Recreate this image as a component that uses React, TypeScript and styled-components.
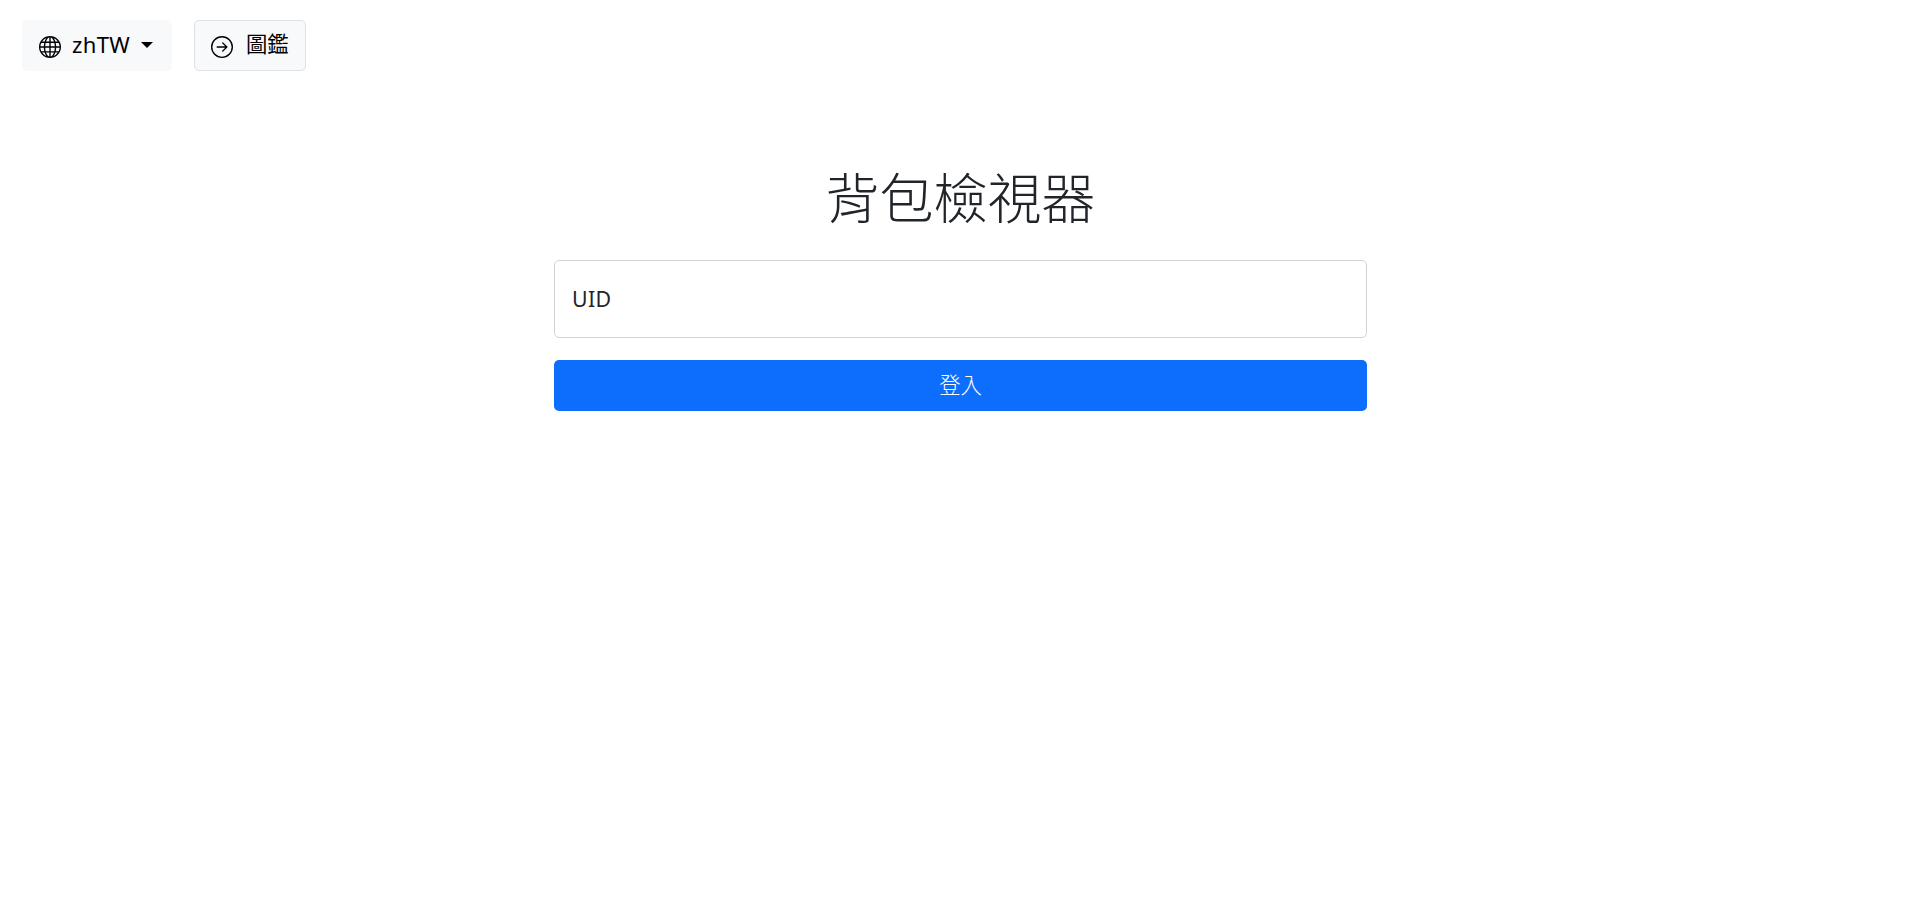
import styled, { createGlobalStyle } from "styled-components";

const GlobalStyle = createGlobalStyle`
  html,
  body {
    margin: 0;
    padding: 0;
    background: #fff;
  }

  body {
    font-family: "Noto Sans", "Noto Sans CJK TC", sans-serif;
    font-size: 21.33px;
    line-height: 1.5;
    color: #212529;
  }

  * {
    box-sizing: border-box;
  }
`;

const Page = styled.div`
  min-height: 100vh;
  padding: 20px 20px 20px 22px;
`;

const Toolbar = styled.nav`
  display: flex;
  align-items: stretch;
  gap: 22px;
  height: 51px;
`;

const ToolButton = styled.button<{ $outlined?: boolean }>`
  display: flex;
  align-items: center;
  width: ${(p) => (p.$outlined ? "112px" : "150px")};
  padding: 0 0 0 ${(p) => (p.$outlined ? "16px" : "17px")};
  gap: ${(p) => (p.$outlined ? "13px" : "11px")};
  font: inherit;
  color: #000;
  background: #f8f9fa;
  border: ${(p) => (p.$outlined ? "1px solid #dee2e6" : "0")};
  border-radius: 5px;

  & svg {
    flex: none;
    margin-top: 2px;
  }
`;

const Label = styled.span`
  margin-top: -2px;
  font-size: 22px;
  letter-spacing: 0.4px;
`;

const CjkLabel = styled.span`
  margin-top: -6px;
  font-family: "Noto Sans CJK TC", sans-serif;
`;

const Caret = styled.span`
  width: 0;
  height: 0;
  margin: -2px 0 0 0;
  border-top: 6px solid #000;
  border-left: 6.5px solid transparent;
  border-right: 6.5px solid transparent;
`;

const Main = styled.main`
  width: 813px;
  margin: 93px auto 0;
`;

const Title = styled.h1`
  margin: 0 0 31px;
  font-family: "Noto Sans CJK TC", sans-serif;
  font-size: 54px;
  font-weight: 300;
  line-height: 1.2;
  text-align: center;
  color: #212529;
`;

const UidField = styled.div`
  display: flex;
  align-items: center;
  height: 78px;
  padding: 0 17px;
  background: #fff;
  border: 1px solid #ced4da;
  border-radius: 5px;
  color: #212529;
  letter-spacing: 0.3px;
`;

const SubmitButton = styled.button`
  display: block;
  width: 100%;
  height: 51px;
  margin-top: 22px;
  padding: 0 0 4px;
  font-family: "Noto Sans CJK TC", sans-serif;
  font-size: 21.33px;
  font-weight: 300;
  color: #fff;
  background: #0d6efd;
  border: 0;
  border-radius: 5px;
`;

function GlobeIcon() {
  return (
    <svg width="22" height="22" viewBox="0 0 16 16" fill="currentColor">
      <path d="M0 8a8 8 0 1 1 16 0A8 8 0 0 1 0 8zm7.5-6.923c-.67.204-1.335.82-1.887 1.855A7.97 7.97 0 0 0 5.145 4H7.5V1.077zM4.09 4a9.267 9.267 0 0 1 .64-1.539 6.7 6.7 0 0 1 .597-.933A7.025 7.025 0 0 0 2.255 4H4.09zm-.582 3.5c.03-.877.138-1.718.312-2.5H1.674a6.958 6.958 0 0 0-.656 2.5h2.49zM4.847 5a12.5 12.5 0 0 0-.338 2.5H7.5V5H4.847zM8.5 5v2.5h2.99a12.495 12.495 0 0 0-.337-2.5H8.5zM4.51 8.5a12.5 12.5 0 0 0 .337 2.5H7.5V8.5H4.51zm3.99 0V11h2.653c.187-.765.306-1.608.338-2.5H8.5zM5.145 12c.138.386.295.744.468 1.068.552 1.035 1.218 1.65 1.887 1.855V12H5.145zm.182 2.472a6.696 6.696 0 0 1-.597-.933A9.268 9.268 0 0 1 4.09 12H2.255a7.024 7.024 0 0 0 3.072 2.472zM3.82 11a13.652 13.652 0 0 1-.312-2.5h-2.49c.062.89.291 1.733.656 2.5H3.82zm6.853 3.472A7.024 7.024 0 0 0 13.745 12H11.91a9.27 9.27 0 0 1-.64 1.539 6.688 6.688 0 0 1-.597.933zM8.5 12v2.923c.67-.204 1.335-.82 1.887-1.855.173-.324.33-.682.468-1.068H8.5zm3.68-1h2.146c.365-.767.594-1.61.656-2.5h-2.49a13.65 13.65 0 0 1-.312 2.5zm2.802-3.5a6.959 6.959 0 0 0-.656-2.5H12.18c.174.782.282 1.623.312 2.5h2.49zM11.27 2.461c.247.464.462.98.64 1.539h1.835a7.024 7.024 0 0 0-3.072-2.472c.218.284.418.598.597.933zM10.855 4a7.966 7.966 0 0 0-.468-1.068C9.835 1.897 9.17 1.282 8.5 1.077V4h2.355z" />
    </svg>
  );
}

function ArrowCircleIcon() {
  return (
    <svg width="22" height="22" viewBox="0 0 16 16" fill="currentColor">
      <path
        fillRule="evenodd"
        d="M1 8a7 7 0 1 0 14 0A7 7 0 0 0 1 8zm15 0A8 8 0 1 1 0 8a8 8 0 0 1 16 0zM4.5 7.5a.5.5 0 0 0 0 1h5.793l-2.147 2.146a.5.5 0 0 0 .708.708l3-3a.5.5 0 0 0 0-.708l-3-3a.5.5 0 1 0-.708.708L10.293 7.5H4.5z"
      />
    </svg>
  );
}

export default function App() {
  return (
    <>
      <GlobalStyle />
      <Page>
        <Toolbar>
          <ToolButton>
            <GlobeIcon />
            <Label>zhTW</Label>
            <Caret />
          </ToolButton>
          <ToolButton $outlined>
            <ArrowCircleIcon />
            <CjkLabel>圖鑑</CjkLabel>
          </ToolButton>
        </Toolbar>
        <Main>
          <Title>背包檢視器</Title>
          <UidField>UID</UidField>
          <SubmitButton>登入</SubmitButton>
        </Main>
      </Page>
    </>
  );
}
